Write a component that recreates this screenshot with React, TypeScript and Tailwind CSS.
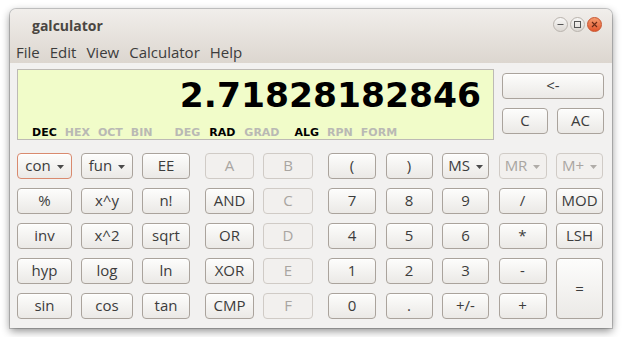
import React from "react";

const font = { fontFamily: '"Open Sans", "Noto Sans", sans-serif' };
const dv = { fontFamily: '"DejaVu Sans", sans-serif' };

function Arrow({ dim }: { dim?: boolean }) {
  return (
    <svg width="7" height="4" viewBox="0 0 7 4" className="ml-[6px] mt-[1px]">
      <path d="M0 0 L7 0 L3.5 4 Z" fill={dim ? "#b0aca8" : "#4a4a4a"} />
    </svg>
  );
}

function Btn({
  label,
  disabled,
  arrow,
  focus,
  tall,
}: {
  label: string;
  disabled?: boolean;
  arrow?: boolean;
  focus?: boolean;
  tall?: boolean;
}) {
  const base =
    "flex items-center justify-center rounded-[4px] border text-[15px] leading-none";
  const h = tall ? "row-span-2 h-full" : "h-[26px]";
  const look = disabled
    ? "border-[#d0cbc6] bg-[#f2f0ee] text-[#a9a5a1]"
    : focus
    ? "border-[#d98a6e] bg-gradient-to-b from-[#fdfdfc] to-[#ebe9e6] text-[#3c3c3c] shadow-[inset_0_1px_0_#ffffff]"
    : "border-[#aaa39c] bg-gradient-to-b from-[#fdfdfc] to-[#ebe9e6] text-[#3c3c3c] shadow-[inset_0_1px_0_#ffffff]";
  return (
    <div className={`${base} ${h} ${look}`} style={font}>
      <span className="pb-[1px]">{label}</span>
      {arrow && <Arrow dim={disabled} />}
    </div>
  );
}

function Circle({ kind }: { kind: "min" | "max" | "close" }) {
  if (kind === "close") {
    return (
      <div className="w-[15px] h-[15px] rounded-full border border-[#c8532e] bg-gradient-to-b from-[#f49a6e] to-[#e2562c] flex items-center justify-center">
        <svg width="7" height="7" viewBox="0 0 7 7">
          <path d="M1 1 L6 6 M6 1 L1 6" stroke="#6a2a16" strokeWidth="1.1" />
        </svg>
      </div>
    );
  }
  return (
    <div className="w-[15px] h-[15px] rounded-full border border-[#b9b3ad] bg-gradient-to-b from-[#f8f7f6] to-[#dcd8d3] flex items-center justify-center">
      {kind === "min" ? (
        <svg width="7" height="7" viewBox="0 0 7 7">
          <path d="M0.5 3.5 L6.5 3.5" stroke="#555" strokeWidth="1" />
        </svg>
      ) : (
        <svg width="7" height="7" viewBox="0 0 7 7">
          <rect x="0.5" y="0.5" width="6" height="6" fill="none" stroke="#555" strokeWidth="1" />
        </svg>
      )}
    </div>
  );
}

export default function App() {
  const g1 = [
    ["con", "a", "f"],
    ["fun", "a"],
    ["EE"],
    ["%"],
    ["x^y"],
    ["n!"],
    ["inv"],
    ["x^2"],
    ["sqrt"],
    ["hyp"],
    ["log"],
    ["ln"],
    ["sin"],
    ["cos"],
    ["tan"],
  ];
  const g2: [string, boolean][] = [
    ["A", true],
    ["B", true],
    ["AND", false],
    ["C", true],
    ["OR", false],
    ["D", true],
    ["XOR", false],
    ["E", true],
    ["CMP", false],
    ["F", true],
  ];
  return (
    <div className="w-[622px] h-[337px] bg-white pl-[10px] pt-[9px]">
      <div className="w-[602px] h-[319px] rounded-t-[6px] bg-[#f2f1f0] shadow-[0_0_0_1px_rgba(0,0,0,0.18),0_3px_9px_rgba(0,0,0,0.45)] flex flex-col overflow-hidden">
        <div className="bg-gradient-to-b from-[#f1eeeb] to-[#dcd6cf] rounded-t-[6px]">
          <div className="h-[29px] flex items-center pl-[22px] pr-[10px]">
            <span className="text-[14px] font-bold text-[#4a4642] mt-[3px]" style={font}>
              galculator
            </span>
            <div className="ml-auto flex items-center gap-[2px] mt-[1px]">
              <Circle kind="min" />
              <Circle kind="max" />
              <Circle kind="close" />
            </div>
          </div>
          <div className="h-[25px] flex items-center pl-[1px] pt-[3px] text-[15px] text-[#3c3c3c]" style={font}>
            {["File", "Edit", "View", "Calculator", "Help"].map((m) => (
              <span key={m} className="px-[5px]">
                {m}
              </span>
            ))}
          </div>
        </div>
        <div className="flex-1 pl-[7px] pr-[8px] pt-[6px]">
          <div className="flex">
            <div className="w-[477px] h-[71px] border border-[#bdbab5] bg-[#f1fcc9] flex flex-col">
              <div
                className="text-right pr-[12px] pt-[5px] text-[34.5px] font-bold leading-[40px] text-black"
                style={dv}
              >
                2.71828182846
              </div>
              <div className="flex mt-[12px] text-[11px] font-bold leading-none" style={dv}>
                <div className="flex gap-[8px] ml-[14px]">
                  <span className="text-black">DEC</span>
                  <span className="text-[#b9b9b4]">HEX</span>
                  <span className="text-[#b9b9b4]">OCT</span>
                  <span className="text-[#b9b9b4]">BIN</span>
                </div>
                <div className="flex gap-[9px] ml-[22px]">
                  <span className="text-[#b9b9b4]">DEG</span>
                  <span className="text-black">RAD</span>
                  <span className="text-[#b9b9b4]">GRAD</span>
                </div>
                <div className="flex gap-[8px] ml-[15px]">
                  <span className="text-black">ALG</span>
                  <span className="text-[#b9b9b4]">RPN</span>
                  <span className="text-[#b9b9b4]">FORM</span>
                </div>
              </div>
            </div>
            <div className="ml-[8px] w-[102px] pt-[4px] flex flex-col gap-[9px]">
              <Btn label="<-" />
              <div className="grid grid-cols-[46px_47px] gap-x-[9px]">
                <Btn label="C" />
                <Btn label="AC" />
              </div>
            </div>
          </div>
          <div className="flex mt-[13px]">
            <div className="grid grid-cols-[55px_52px_48px] gap-x-[9px] gap-y-[9px]">
              {g1.map(([l, a, f]) => (
                <Btn key={l} label={l} arrow={!!a} focus={!!f} />
              ))}
            </div>
            <div className="grid grid-cols-[49px_50px] gap-x-[9px] gap-y-[9px] ml-[15px]">
              {g2.map(([l, d]) => (
                <Btn key={l + "g2"} label={l} disabled={d} />
              ))}
            </div>
            <div className="grid grid-cols-[48px_47px_47px_48px_47px] grid-rows-[26px_26px_26px_26px_26px] gap-x-[9.5px] gap-y-[9px] ml-[15px]">
              <Btn label="(" />
              <Btn label=")" />
              <Btn label="MS" arrow />
              <Btn label="MR" arrow disabled />
              <Btn label="M+" arrow disabled />
              <Btn label="7" />
              <Btn label="8" />
              <Btn label="9" />
              <Btn label="/" />
              <Btn label="MOD" />
              <Btn label="4" />
              <Btn label="5" />
              <Btn label="6" />
              <Btn label="*" />
              <Btn label="LSH" />
              <Btn label="1" />
              <Btn label="2" />
              <Btn label="3" />
              <Btn label="-" />
              <Btn label="=" tall />
              <Btn label="0" />
              <Btn label="." />
              <Btn label="+/-" />
              <Btn label="+" />
            </div>
          </div>
        </div>
      </div>
    </div>
  );
}
